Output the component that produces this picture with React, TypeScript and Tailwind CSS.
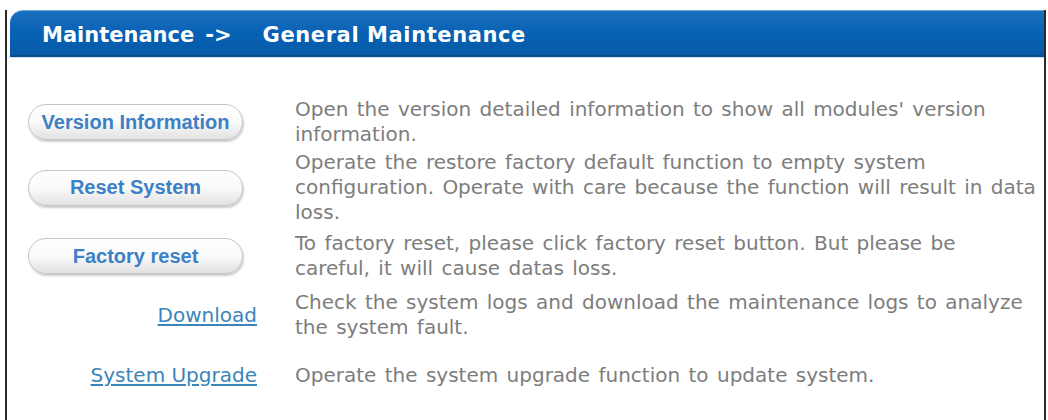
import type { ReactNode } from "react";

type Row = {
  kind: "button" | "link";
  label: string;
  text: string;
  gap: string;
};

const rows: Row[] = [
  {
    kind: "button",
    label: "Version Information",
    text: "Open the version detailed information to show all modules' version information.",
    gap: "mt-0",
  },
  {
    kind: "button",
    label: "Reset System",
    text: "Operate the restore factory default function to empty system configuration. Operate with care because the function will result in data loss.",
    gap: "mt-[3px]",
  },
  {
    kind: "button",
    label: "Factory reset",
    text: "To factory reset, please click factory reset button. But please be careful, it will cause datas loss.",
    gap: "mt-[6px]",
  },
  {
    kind: "link",
    label: "Download",
    text: "Check the system logs and download the maintenance logs to analyze the system fault.",
    gap: "mt-[9px]",
  },
  {
    kind: "link",
    label: "System Upgrade",
    text: "Operate the system upgrade function to update system.",
    gap: "mt-[23px]",
  },
];

function PillButton({ children }: { children: ReactNode }) {
  return (
    <button
      type="button"
      className="flex h-[36px] w-[215px] items-center justify-center rounded-full border border-[#c4c4c4] bg-gradient-to-b from-white via-[#fafafa] to-[#e2e2e2] font-['Liberation_Sans',Arial,sans-serif] text-[20px] font-bold text-[#3c80c6] shadow-[1px_2px_2px_rgba(0,0,0,0.2)]"
    >
      {children}
    </button>
  );
}

export default function App() {
  return (
    <div className="h-[420px] w-[1048px] bg-white pt-[6px] pl-[5px]">
      <div className="h-[413px] w-[1041px] border-x-2 border-b-2 border-[#2b2b2b] bg-white">
        <div className="ml-[3px] mt-[4px] flex h-[47px] items-center rounded-tl-[13px] border-t border-[#6aa6dc] border-b-2 border-b-[#0a4d8c] bg-gradient-to-b from-[#1a6fbf] via-[#0862b4] to-[#075aa8] pt-[6px] pl-[32px] font-['DejaVu_Sans',Verdana,sans-serif] text-[21px] font-bold text-white">
          <span>Maintenance</span>
          <span className="ml-[11px]">-&gt;</span>
          <span className="ml-[31px] tracking-[0.6px]">General Maintenance</span>
        </div>
        <div className="h-px bg-[#cfe0f1]" />

        <div className="pt-[39px] font-['DejaVu_Sans',Verdana,sans-serif] text-[20px] leading-[25px] [word-spacing:2px]">
          {rows.map((row) => (
            <div key={row.label} className={`flex items-center ${row.gap}`}>
              {row.kind === "button" ? (
                <div className="w-[281px] shrink-0 pl-[21px] [word-spacing:0]">
                  <PillButton>{row.label}</PillButton>
                </div>
              ) : (
                <div className="w-[281px] shrink-0 pr-[31px] text-right [word-spacing:0]">
                  <a href="#" className="text-[#3a85b9] underline underline-offset-2">
                    {row.label}
                  </a>
                </div>
              )}
              <p className="ml-[7px] flex-1 pr-[6px] text-[#7d7d7d]">{row.text}</p>
            </div>
          ))}
        </div>
      </div>
    </div>
  );
}
